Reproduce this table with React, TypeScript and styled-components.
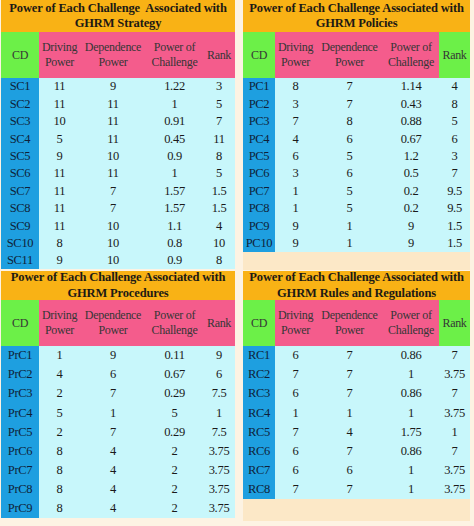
import React from "react";
import styled, { createGlobalStyle } from "styled-components";

type Row = [string, string, string, string, string];

interface PanelData {
  title: [string, string];
  rows: Row[];
  rowHeight: number;
  widths: number[];
  greenRank: boolean;
}

const GlobalStyle = createGlobalStyle`
  body {
    margin: 0;
    background: #fdf3e3;
  }
`;

const strategy: Row[] = [
  ["SC1", "11", "9", "1.22", "3"],
  ["SC2", "11", "11", "1", "5"],
  ["SC3", "10", "11", "0.91", "7"],
  ["SC4", "5", "11", "0.45", "11"],
  ["SC5", "9", "10", "0.9", "8"],
  ["SC6", "11", "11", "1", "5"],
  ["SC7", "11", "7", "1.57", "1.5"],
  ["SC8", "11", "7", "1.57", "1.5"],
  ["SC9", "11", "10", "1.1", "4"],
  ["SC10", "8", "10", "0.8", "10"],
  ["SC11", "9", "10", "0.9", "8"],
];

const policies: Row[] = [
  ["PC1", "8", "7", "1.14", "4"],
  ["PC2", "3", "7", "0.43", "8"],
  ["PC3", "7", "8", "0.88", "5"],
  ["PC4", "4", "6", "0.67", "6"],
  ["PC5", "6", "5", "1.2", "3"],
  ["PC6", "3", "6", "0.5", "7"],
  ["PC7", "1", "5", "0.2", "9.5"],
  ["PC8", "1", "5", "0.2", "9.5"],
  ["PC9", "9", "1", "9", "1.5"],
  ["PC10", "9", "1", "9", "1.5"],
];

const procedures: Row[] = [
  ["PrC1", "1", "9", "0.11", "9"],
  ["PrC2", "4", "6", "0.67", "6"],
  ["PrC3", "2", "7", "0.29", "7.5"],
  ["PrC4", "5", "1", "5", "1"],
  ["PrC5", "2", "7", "0.29", "7.5"],
  ["PrC6", "8", "4", "2", "3.75"],
  ["PrC7", "8", "4", "2", "3.75"],
  ["PrC8", "8", "4", "2", "3.75"],
  ["PrC9", "8", "4", "2", "3.75"],
];

const rules: Row[] = [
  ["RC1", "6", "7", "0.86", "7"],
  ["RC2", "7", "7", "1", "3.75"],
  ["RC3", "6", "7", "0.86", "7"],
  ["RC4", "1", "1", "1", "3.75"],
  ["RC5", "7", "4", "1.75", "1"],
  ["RC6", "6", "7", "0.86", "7"],
  ["RC7", "6", "6", "1", "3.75"],
  ["RC8", "7", "7", "1", "3.75"],
];

const leftWidths = [38, 41, 66, 57, 32];
const rightWidths = [32, 41, 67, 56, 31];

const panels: PanelData[] = [
  {
    title: ["Power of Each Challenge\u00a0 Associated with", "GHRM Strategy"],
    rows: strategy,
    rowHeight: 17.4,
    widths: leftWidths,
    greenRank: false,
  },
  {
    title: ["Power of Each Challenge Associated with", "GHRM Policies"],
    rows: policies,
    rowHeight: 17.4,
    widths: rightWidths,
    greenRank: true,
  },
  {
    title: ["Power of Each Challenge Associated with", "GHRM Procedures"],
    rows: procedures,
    rowHeight: 19.1,
    widths: leftWidths,
    greenRank: false,
  },
  {
    title: ["Power of Each Challenge Associated with", "GHRM Rules and Regulations"],
    rows: rules,
    rowHeight: 19.1,
    widths: rightWidths,
    greenRank: true,
  },
];

const Page = styled.div`
  display: grid;
  grid-template-columns: 234px 227px;
  grid-template-rows: 270px 250px;
  column-gap: 8px;
  row-gap: 1px;
  padding-left: 1px;
  width: 474px;
  height: 526px;
  box-sizing: border-box;
  font-family: "Liberation Serif", "Times New Roman", serif;
`;

const PanelBox = styled.div<{ $bg: boolean }>`
  display: flex;
  flex-direction: column;
  background: ${(p) => (p.$bg ? "#fce8c7" : "transparent")};
`;

const Title = styled.div<{ $h: number }>`
  height: ${(p) => p.$h}px;
  background: #f9b215;
  color: #1d1a14;
  font-weight: bold;
  font-size: 12.5px;
  line-height: 15.5px;
  letter-spacing: -0.15px;
  text-align: center;
  display: flex;
  flex-direction: column;
  justify-content: center;
  white-space: nowrap;
`;

const Table = styled.table`
  border-collapse: collapse;
  table-layout: fixed;
  width: 100%;
`;

const HeadCell = styled.th<{ $green: boolean }>`
  height: 46px;
  padding: 0;
  background: ${(p) => (p.$green ? "#6cf048" : "#f45c8c")};
  color: #363636;
  font-weight: normal;
  font-size: 12px;
  line-height: 15px;
  letter-spacing: -0.3px;
  text-align: center;
  vertical-align: middle;
  white-space: nowrap;
`;

const Cell = styled.td<{ $id: boolean; $h: number }>`
  height: ${(p) => p.$h}px;
  padding: 0;
  background: ${(p) => (p.$id ? "#1e9fe0" : "#c8f7fb")};
  color: ${(p) => (p.$id ? "#0f1f3a" : "#1a1a1a")};
  font-size: 12.5px;
  line-height: 1;
  letter-spacing: -0.3px;
  text-align: center;
  vertical-align: middle;
`;

const headers = ["CD", "Driving\nPower", "Dependence\nPower", "Power of\nChallenge", "Rank"];

const Panel: React.FC<{ data: PanelData; titleH: number }> = ({ data, titleH }) => (
  <PanelBox $bg={data.greenRank}>
    <Title $h={titleH}>
      <span>{data.title[0]}</span>
      <span>{data.title[1]}</span>
    </Title>
    <Table>
      <colgroup>
        {data.widths.map((w, i) => (
          <col key={i} style={{ width: w }} />
        ))}
      </colgroup>
      <thead>
        <tr>
          {headers.map((h, i) => (
            <HeadCell key={h} $green={i === 0 || (i === 4 && data.greenRank)}>
              {h.split("\n").map((line, j) => (
                <React.Fragment key={j}>
                  {j > 0 && <br />}
                  {line}
                </React.Fragment>
              ))}
            </HeadCell>
          ))}
        </tr>
      </thead>
      <tbody>
        {data.rows.map((row) => (
          <tr key={row[0]}>
            {row.map((v, i) => (
              <Cell key={i} $id={i === 0} $h={data.rowHeight}>
                {v}
              </Cell>
            ))}
          </tr>
        ))}
      </tbody>
    </Table>
  </PanelBox>
);

const App: React.FC = () => (
  <>
    <GlobalStyle />
    <Page>
      {panels.map((p, i) => (
        <Panel key={i} data={p} titleH={i < 2 ? 32 : 29} />
      ))}
    </Page>
  </>
);

export default App;
